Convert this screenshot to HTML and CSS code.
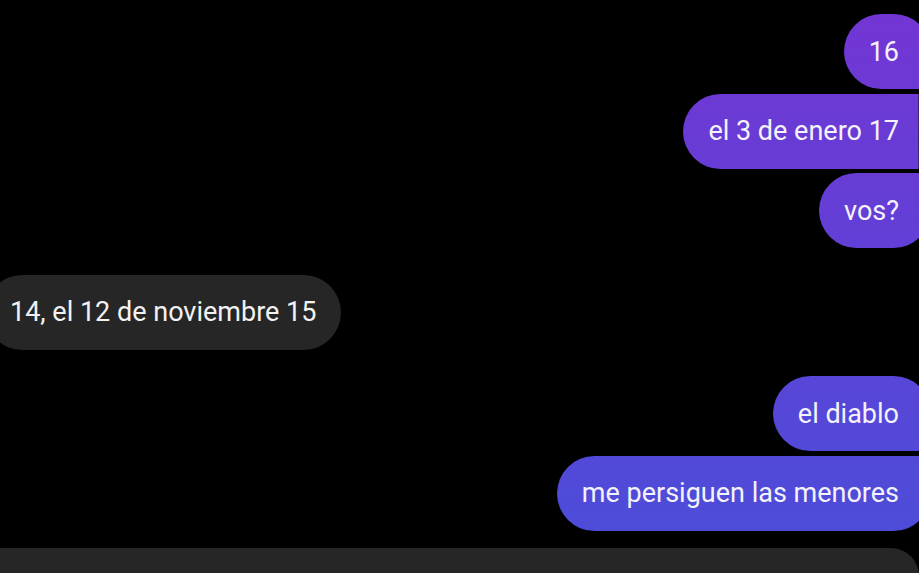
FILE: index.html
```html
<!DOCTYPE html>
<html lang="es">
<head>
<meta charset="utf-8">
<title>Chat</title>
<link rel="stylesheet" href="styles.css">
</head>
<body>
<div class="chat">
  <div class="group sent">
    <div class="bubble first">16</div>
    <div class="bubble middle">el 3 de enero 17</div>
    <div class="bubble last">vos?</div>
  </div>
  <div class="group received">
    <div class="bubble single">14, el 12 de noviembre 15</div>
  </div>
  <div class="group sent">
    <div class="bubble first">el diablo</div>
    <div class="bubble last">me persiguen las menores</div>
  </div>
  <div class="composer"></div>
</div>
</body>
</html>
```
FILE: styles.css
```css
html, body {
  margin: 0;
  padding: 0;
  background: #000;
  height: 573px;
  overflow: hidden;
}

.chat {
  display: flex;
  flex-direction: column;
  gap: 26.5px;
  padding-top: 14px;
  font-family: Roboto, "Liberation Sans", sans-serif;
}

.group {
  display: flex;
  flex-direction: column;
  gap: 4.5px;
}

.group.sent {
  align-items: flex-end;
  margin-right: -12px;
}

.group.received {
  align-items: flex-start;
  margin-left: -15px;
}

.bubble {
  height: 75px;
  box-sizing: border-box;
  padding: 0 25px;
  display: flex;
  align-items: center;
  font-size: 27px;
  color: #f4f2fb;
  white-space: nowrap;
}

.sent .bubble {
  padding-right: 32px;
  background: linear-gradient(to bottom, #7335d4, #4a4ed9) fixed;
  border-radius: 38px 6px 6px 38px;
}

.sent .bubble.first {
  border-top-right-radius: 38px;
}

.sent .bubble.last {
  border-bottom-right-radius: 38px;
}

.received .bubble {
  background: #262626;
  color: #f2f2f2;
  border-radius: 38px;
}

.composer {
  margin-top: -9px;
  height: 40px;
  background: #262626;
  border-top-right-radius: 28px;
}
```
